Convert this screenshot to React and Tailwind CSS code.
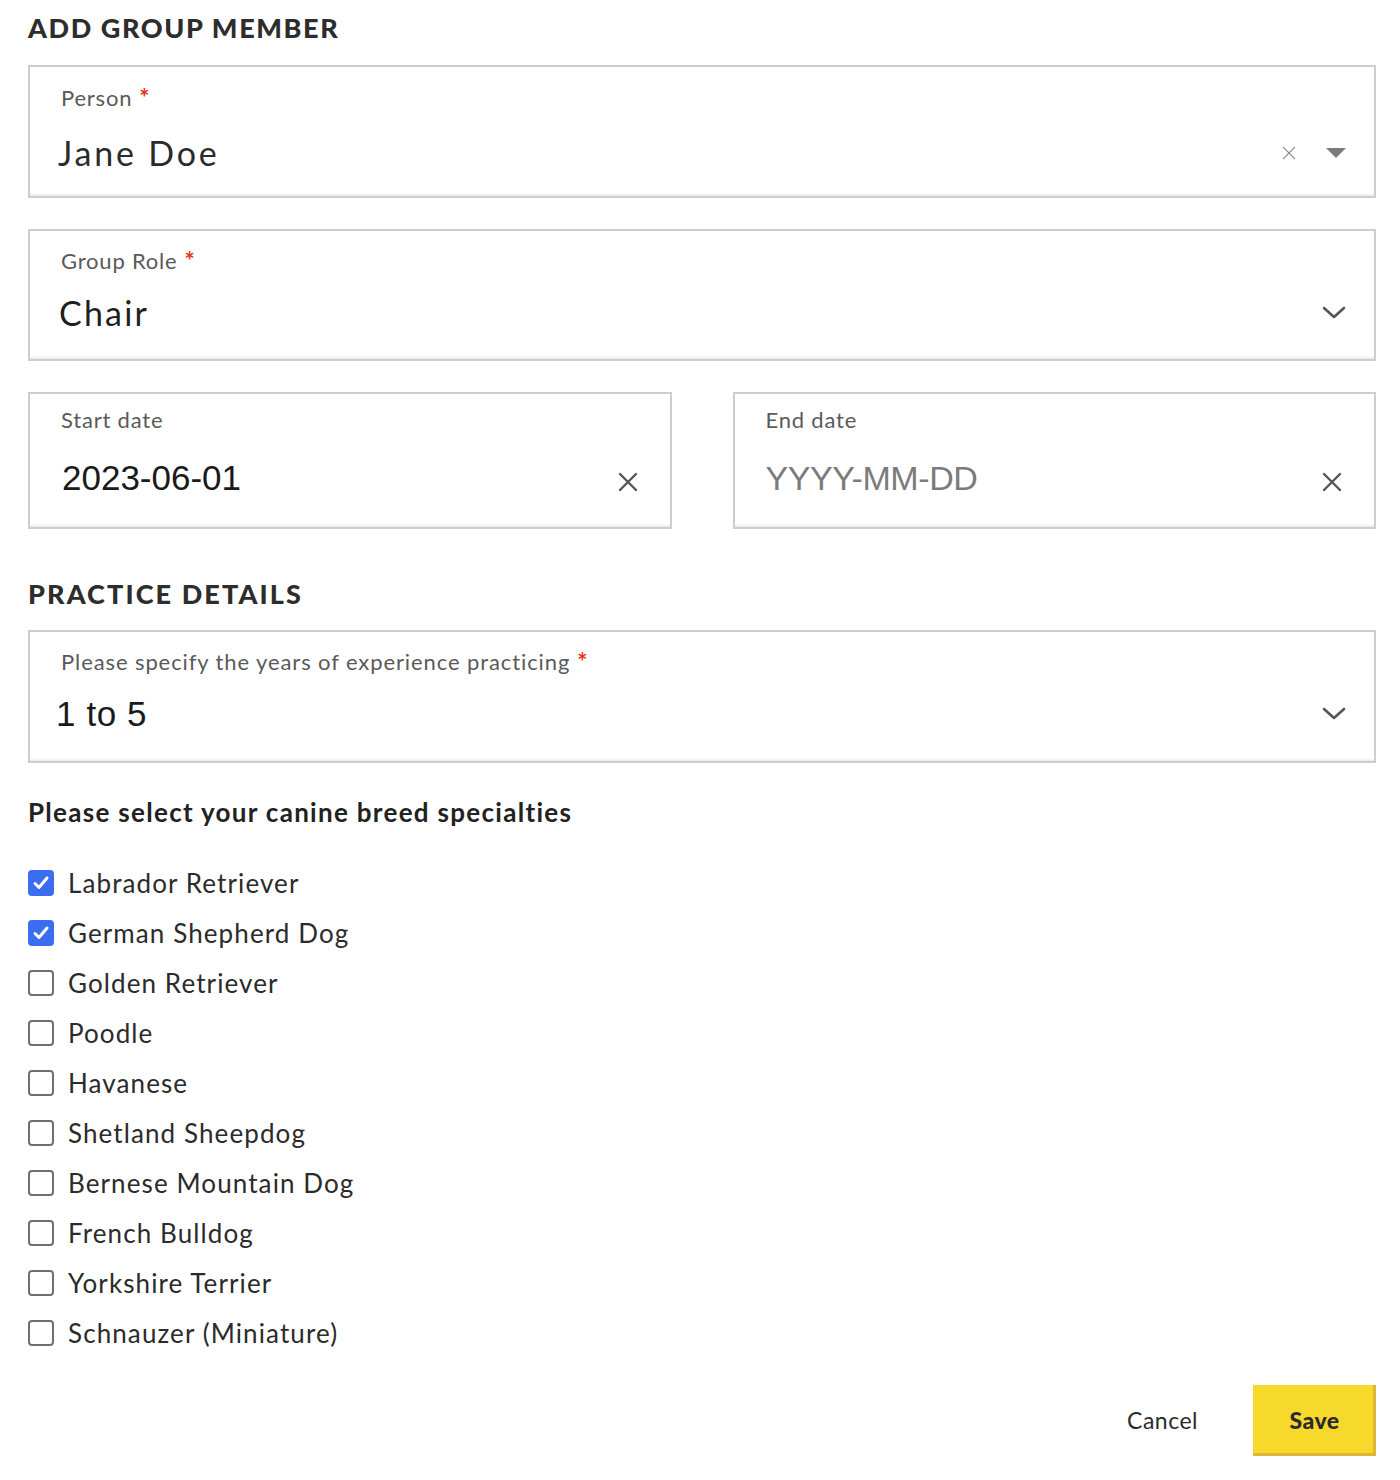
import { useState } from 'react'

const breeds = [
    'Labrador Retriever',
    'German Shepherd Dog',
    'Golden Retriever',
    'Poodle',
    'Havanese',
    'Shetland Sheepdog',
    'Bernese Mountain Dog',
    'French Bulldog',
    'Yorkshire Terrier',
    'Schnauzer (Miniature)',
]

const font = { fontFamily: 'Lato, "Open Sans", sans-serif' }

function Star() {
    return <span className="text-[#e8321c] text-[24px] font-bold align-top ml-[7px] relative top-[3px] leading-[24px]">*</span>
}

function Chevron() {
    return (
        <svg width="24" height="14" viewBox="0 0 24 14" fill="none">
            <path d="M2 2 L12 11 L22 2" stroke="#555" strokeWidth="2.6" strokeLinecap="round" strokeLinejoin="round" />
        </svg>
    )
}

function Cross({ size = 20, color = '#555', stroke = 2.4 }) {
    return (
        <svg width={size} height={size} viewBox="0 0 20 20" fill="none">
            <path d="M2 2 L18 18 M18 2 L2 18" stroke={color} strokeWidth={stroke} strokeLinecap="round" />
        </svg>
    )
}

function Box({ className = '', children }) {
    return (
        <div className={`border-2 border-[#cdcdcd] bg-white shadow-[inset_0_-3px_3px_-2px_rgba(0,0,0,0.12)] ${className}`}>
            {children}
        </div>
    )
}

function Check({ checked, onChange }) {
    return (
        <button
            type="button"
            onClick={onChange}
            className={`w-[26px] h-[26px] rounded-[4px] flex items-center justify-center flex-shrink-0 ${checked ? 'bg-[#3a6df0]' : 'border-2 border-[#6f6f6f] bg-white'}`}
        >
            {checked && (
                <svg width="18" height="18" viewBox="0 0 18 18" fill="none">
                    <path d="M3 9.5 L7 13.5 L15 4" stroke="white" strokeWidth="3" strokeLinecap="round" strokeLinejoin="round" />
                </svg>
            )}
        </button>
    )
}

export default function App() {
    const [selected, setSelected] = useState(['Labrador Retriever', 'German Shepherd Dog'])

    const toggle = (b) =>
        setSelected(s => (s.includes(b) ? s.filter(x => x !== b) : [...s, b]))

    return (
        <div className="w-[1400px] min-h-[1480px] bg-white pl-[28px] pr-[24px] text-[#2b2b2b]" style={font}>
            <h1 className="pt-[11px] text-[27px] font-black tracking-[1.6px] leading-[34px] text-[#2d2d2d]">ADD GROUP MEMBER</h1>

            {/* Person */}
            <Box className="mt-[20px] h-[133px] pl-[31px] pr-[28px] flex flex-col">
                <div className="pt-[16px] text-[22px] tracking-[0.8px] text-[#5a5a5a] leading-[30px]">Person<Star /></div>
                <div className="mt-[20px] flex items-center">
                    <span className="flex-1 -ml-[3px] text-[34px] tracking-[2.8px] leading-[40px] text-[#2b2b2b]">Jane Doe</span>
                    <Cross size={14} color="#8a8a8a" stroke={1.8} />
                    <svg className="ml-[30px]" width="20" height="10" viewBox="0 0 20 10">
                        <path d="M0 0 L20 0 L10 10 Z" fill="#7a7a7a" />
                    </svg>
                </div>
            </Box>

            {/* Group role */}
            <Box className="mt-[31px] h-[132px] pl-[31px] pr-[28px] flex flex-col">
                <div className="pt-[15px] text-[22px] tracking-[0.8px] text-[#5a5a5a] leading-[30px]">Group Role<Star /></div>
                <div className="mt-[17px] flex items-center">
                    <span className="flex-1 -ml-[2px] text-[34px] tracking-[2.2px] leading-[40px] text-[#1f1f1f]">Chair</span>
                    <Chevron />
                </div>
            </Box>

            {/* Dates */}
            <div className="mt-[31px] grid grid-cols-2 gap-[61px]">
                <Box className="h-[137px] pl-[31px] pr-[32px] flex flex-col">
                    <div className="pt-[11px] text-[22px] tracking-[0.8px] text-[#5a5a5a] leading-[30px]">Start date</div>
                    <div className="mt-[21px] flex items-center">
                        <span className="flex-1 pl-[1px] text-[35px] leading-[44px] text-[#1a1a1a]" style={{ fontFamily: '"Liberation Sans", Arial, sans-serif' }}>2023-06-01</span>
                        <span className="mt-[8px]"><Cross size={20} /></span>
                    </div>
                </Box>
                <Box className="h-[137px] pl-[31px] pr-[32px] flex flex-col">
                    <div className="pt-[11px] text-[22px] tracking-[0.8px] text-[#5a5a5a] leading-[30px]">End date</div>
                    <div className="mt-[21px] flex items-center">
                        <span className="flex-1 text-[34px] tracking-[-0.4px] leading-[44px] text-[#7b7b7b]" style={{ fontFamily: '"Liberation Sans", Arial, sans-serif' }}>YYYY-MM-DD</span>
                        <span className="mt-[8px]"><Cross size={20} /></span>
                    </div>
                </Box>
            </div>

            <h2 className="mt-[48px] text-[27px] font-black tracking-[2.1px] leading-[34px] text-[#2d2d2d]">PRACTICE DETAILS</h2>

            {/* Experience */}
            <Box className="mt-[19px] h-[133px] pl-[31px] pr-[28px] flex flex-col">
                <div className="pt-[15px] text-[22px] tracking-[0.9px] text-[#5a5a5a] leading-[30px]">Please specify the years of experience practicing<Star /></div>
                <div className="mt-[15px] flex items-center">
                    <span className="flex-1 -ml-[5px] text-[35px] tracking-[0.6px] leading-[44px] text-[#1a1a1a]" style={{ fontFamily: '"Liberation Sans", Arial, sans-serif' }}>1 to 5</span>
                    <Chevron />
                </div>
            </Box>

            <h3 className="mt-[32px] text-[26px] font-bold tracking-[1.3px] leading-[34px] text-[#222]">Please select your canine breed specialties</h3>

            <div className="mt-[37px] flex flex-col gap-[16px]">
                {breeds.map(b => (
                    <label key={b} className="flex items-center gap-[14px] h-[34px] cursor-pointer">
                        <Check checked={selected.includes(b)} onChange={() => toggle(b)} />
                        <span className="text-[26px] tracking-[1.1px] leading-[34px] text-[#2b2b2b]">{b}</span>
                    </label>
                ))}
            </div>

            <div className="mt-[35px] flex justify-end items-center">
                <button className="text-[23px] tracking-[0.5px] text-[#2b2b2b] px-[28px] h-[68px]">Cancel</button>
                <button className="ml-[27px] w-[123px] h-[71px] bg-[#f7d92b] shadow-[inset_-3px_-3px_0_#e0b63a] text-[23px] font-black tracking-[0.5px] text-[#2b2b2b]">Save</button>
            </div>
        </div>
    )
}
